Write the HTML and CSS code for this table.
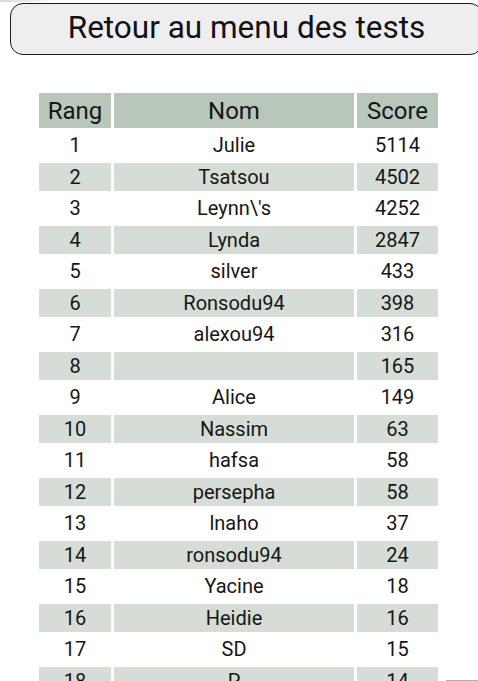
FILE: index.html
```html
<!DOCTYPE html>
<html lang="fr">
<head>
<meta charset="utf-8">
<title>Classement</title>
<link rel="stylesheet" href="styles.css">
</head>
<body>
<div class="topshade"></div>
<button class="back">Retour au menu des tests</button>
<table class="scores">
  <thead>
    <tr><th class="c-rang">Rang</th><th class="c-nom">Nom</th><th class="c-score">Score</th></tr>
  </thead>
  <tbody>
    <tr><td>1</td><td>Julie</td><td>5114</td></tr>
    <tr class="alt"><td>2</td><td>Tsatsou</td><td>4502</td></tr>
    <tr><td>3</td><td>Leynn\'s</td><td>4252</td></tr>
    <tr class="alt"><td>4</td><td>Lynda</td><td>2847</td></tr>
    <tr><td>5</td><td>silver</td><td>433</td></tr>
    <tr class="alt"><td>6</td><td>Ronsodu94</td><td>398</td></tr>
    <tr><td>7</td><td>alexou94</td><td>316</td></tr>
    <tr class="alt"><td>8</td><td></td><td>165</td></tr>
    <tr><td>9</td><td>Alice</td><td>149</td></tr>
    <tr class="alt"><td>10</td><td>Nassim</td><td>63</td></tr>
    <tr><td>11</td><td>hafsa</td><td>58</td></tr>
    <tr class="alt"><td>12</td><td>persepha</td><td>58</td></tr>
    <tr><td>13</td><td>lnaho</td><td>37</td></tr>
    <tr class="alt"><td>14</td><td>ronsodu94</td><td>24</td></tr>
    <tr><td>15</td><td>Yacine</td><td>18</td></tr>
    <tr class="alt"><td>16</td><td>Heidie</td><td>16</td></tr>
    <tr><td>17</td><td>SD</td><td>15</td></tr>
    <tr class="alt"><td>18</td><td>P</td><td>14</td></tr>
  </tbody>
</table>
<div class="scrollthumb"></div>
</body>
</html>
```
FILE: styles.css
```css
html, body {
  margin: 0;
  padding: 0;
  background: #ffffff;
  overflow: hidden;
  height: 681px;
}
body {
  font-family: Roboto, "Liberation Sans", sans-serif;
  color: #161616;
  position: relative;
}
.topshade {
  position: absolute;
  left: 0;
  top: 0;
  width: 60px;
  height: 2px;
  background: linear-gradient(to right, #d8d8d8, #ffffff);
}
.back {
  display: block;
  box-sizing: border-box;
  margin: 3px 0 0 10px;
  width: 473px;
  height: 52px;
  border: 1.5px solid #1a1a1a;
  border-radius: 13px;
  background: #eeeef0;
  font-family: Roboto, "Liberation Sans", sans-serif;
  font-size: 31.5px;
  color: #111;
  padding: 0 0 3px 0;
  text-align: center;
}
.scores {
  margin: 35px 0 0 36px;
  border-collapse: separate;
  border-spacing: 3px;
  font-size: 20px;
}
.scores th {
  background: #b9c7bb;
  font-weight: normal;
  font-size: 24px;
  height: 35px;
  padding: 0;
  text-align: center;
}
.c-rang { width: 72px; }
.c-nom { width: 240px; }
.c-score { width: 81px; }
.scores td {
  height: 28.5px;
  padding: 0;
  text-align: center;
}
.scores tr.alt td {
  background: #d5ddd6;
}
.scrollthumb {
  position: absolute;
  left: 446px;
  top: 680px;
  width: 32px;
  height: 1px;
  background: #b0b0b0;
}
```
